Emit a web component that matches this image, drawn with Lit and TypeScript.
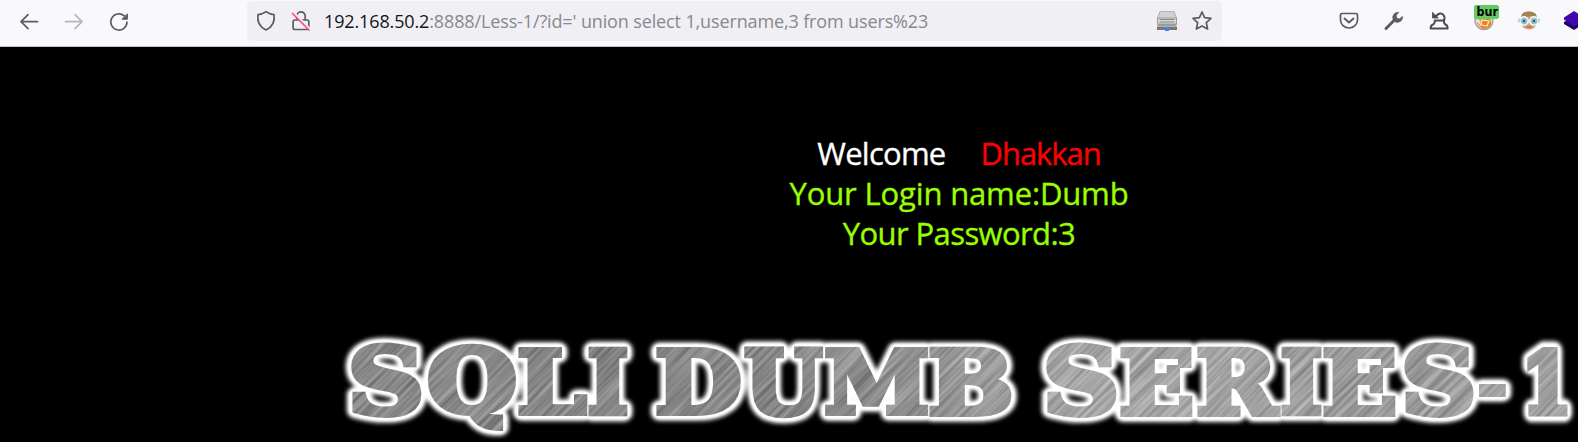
import { LitElement, html, svg, css } from "lit";
import { customElement } from "lit/decorators.js";

const BANNER_FONT = "DejaVu Serif";

// Each banner letter with the box its ink fills: [char, left, right, top, bottom]
const LETTERS: [string, number, number, number, number][] = [
  ["S", 351, 422, 343, 418],
  ["Q", 428, 516, 343, 431],
  ["L", 518, 588, 347, 416],
  ["I", 588, 628, 347, 416],
  ["D", 656, 741, 347, 416],
  ["U", 744, 824, 347, 418],
  ["M", 825, 928, 347, 416],
  ["B", 929, 1011, 347, 417],
  ["S", 1046, 1117, 343, 418],
  ["E", 1120, 1193, 347, 417],
  ["R", 1197, 1281, 347, 417],
  ["I", 1281, 1322, 347, 416],
  ["E", 1323, 1396, 347, 417],
  ["S", 1404, 1474, 343, 418],
  ["-", 1479, 1506, 383, 397],
  ["1", 1527, 1568, 347, 416],
];

@customElement("sqli-banner")
class SqliBanner extends LitElement {
  static styles = css`
    :host { display: block; }
    .art { display: block; width: 100%; height: 100%; }
    .glyph { font-family: "DejaVu Serif", serif; font-weight: 700; font-size: 100px; }
    .glyph { vector-effect: non-scaling-stroke; stroke-linejoin: round; }
    .halo { fill: #fff; stroke: #fff; stroke-width: 17; }
    .rim { fill: #fff; stroke: #fff; stroke-width: 12; }
    .gap { fill: #000; stroke: #000; stroke-width: 8; }
    .body { fill: #fff; stroke: #fff; stroke-width: 6.4; stroke-linejoin: miter; }
  `;

  private transforms: string[] = [];

  constructor() {
    super();
    const ctx = document.createElement("canvas").getContext("2d")!;
    ctx.font = `bold 100px "${BANNER_FONT}"`;
    this.transforms = LETTERS.map(([ch, l, r, t, b]) => {
      const m = ctx.measureText(ch);
      const inset = 3.2;
      const sx = (r - l - inset * 2) / (m.actualBoundingBoxRight + m.actualBoundingBoxLeft);
      const sy = (b - t - inset * 2) / (m.actualBoundingBoxAscent + m.actualBoundingBoxDescent);
      const tx = l + inset + m.actualBoundingBoxLeft * sx;
      const ty = t + inset + m.actualBoundingBoxAscent * sy;
      return `matrix(${sx} 0 0 ${sy} ${tx} ${ty})`;
    });
  }

  private glyphs(kinds: string[]) {
    return LETTERS.map(([ch], i) =>
      kinds.map((k) => svg`<text class="glyph ${k}" transform=${this.transforms[i]}>${ch}</text>`)
    );
  }

  render() {
    return html`<svg class="art" viewBox="330 320 1248 122" preserveAspectRatio="none">
      <defs>
        <filter id="soft" filterUnits="userSpaceOnUse" x="330" y="320" width="1248" height="122">
          <feGaussianBlur stdDeviation="2"></feGaussianBlur>
        </filter>
        <filter id="rimsoft" filterUnits="userSpaceOnUse" x="330" y="320" width="1248" height="122">
          <feGaussianBlur stdDeviation="0.9"></feGaussianBlur>
        </filter>
        <filter id="grain" filterUnits="userSpaceOnUse" x="-100" y="350" width="1100" height="1200" color-interpolation-filters="sRGB">
          <feTurbulence type="fractalNoise" baseFrequency="0.01 0.3" numOctaves="3" seed="4"></feTurbulence>
          <feColorMatrix type="matrix" values="1.1 0 0 0 -0.03  1.1 0 0 0 -0.03  1.1 0 0 0 -0.03  0 0 0 0 1"></feColorMatrix>
        </filter>
        <linearGradient id="metal" gradientUnits="userSpaceOnUse" x1="340" y1="0" x2="1578" y2="0">
          <stop offset="0" stop-color="#8c8c8c"></stop>
          <stop offset=".3" stop-color="#848484"></stop>
          <stop offset=".45" stop-color="#939393"></stop>
          <stop offset=".6" stop-color="#b8b8b8"></stop>
          <stop offset=".7" stop-color="#b4b4b4"></stop>
          <stop offset=".85" stop-color="#a2a2a2"></stop>
          <stop offset="1" stop-color="#b0b0b0"></stop>
        </linearGradient>
        <mask id="letters" maskUnits="userSpaceOnUse" x="330" y="320" width="1248" height="122">
          ${this.glyphs(["gap", "body"])}
        </mask>
      </defs>
      <g filter="url(#soft)">${this.glyphs(["halo"])}</g>
      <g filter="url(#rimsoft)">${this.glyphs(["rim"])}</g>
      <g mask="url(#letters)">
        <rect x="330" y="320" width="1248" height="122" fill="url(#metal)"></rect>
        <g opacity=".33"><g transform="rotate(-45)">
          <rect x="-100" y="350" width="1100" height="1200" transform="translate(0 0)" filter="url(#grain)"></rect>
        </g></g>
      </g>
    </svg>`;
  }
}

@customElement("app-root")
class AppRoot extends LitElement {
  static styles = css`
    :host {
      display: flex; flex-direction: column; width: 1578px; height: 442px;
      overflow: hidden; background: #000;
      font-family: "Open Sans", "Noto Sans", sans-serif;
    }
    .toolbar {
      box-sizing: border-box; display: flex; flex: none; height: 47px;
      background: #f9f9fb; border-bottom: 1px solid #c3c3c5; padding-top: 1px;
    }
    .nav { display: flex; flex: none; gap: 23px; width: 247px; box-sizing: border-box; padding: 10px 0 0 18px; }
    .icon { display: block; flex: none; width: 22px; height: 22px; overflow: visible; fill: none;
      stroke: #5b5b66; stroke-width: 1.7; stroke-linecap: round; stroke-linejoin: round; }
    .forward { opacity: .42; }
    .urlbar {
      box-sizing: border-box; display: flex; flex: none; width: 975px; height: 40px; padding: 9px 9px 0 8px;
      background: #f0f0f4; border-radius: 5px;
    }
    .urlbar .icon + .icon { margin-left: 13px; }
    .url { flex: 1; margin: -1px 0 0 12px; font-size: 18px; line-height: 24px; color: #88888e; white-space: pre; letter-spacing: -0.13px; }
    .host { color: #15141a; }
    .actions { display: flex; flex: none; gap: 23px; padding: 9px 0 0 116px; }
    .tag { font: 700 13px "DejaVu Sans", sans-serif; fill: #000; stroke: none; }
    .page { flex: 1; display: flex; flex-direction: column; }
    .message { width: 338px; margin-left: 790px; padding-top: 86px; color: #99ff00; font-size: 31px; line-height: 40px; -webkit-text-stroke: 0.35px currentColor; }
    .line { display: flex; justify-content: center; white-space: nowrap; }
    .welcome { color: #fff; margin-right: 35px; letter-spacing: -0.75px; }
    .name { color: #f00; letter-spacing: -1.05px; }
    .login { letter-spacing: -0.15px; }
    .pass { letter-spacing: -0.6px; }
    sqli-banner { width: 1248px; height: 122px; margin: 67px 0 0 330px; flex: none; }
  `;

  render() {
    return html`
      <div class="toolbar">
        <div class="nav">
          <svg class="icon" viewBox="0 0 22 22"><path d="M19.5 10.7H3M10 3.7l-7 7 7 7"/></svg>
          <svg class="icon forward" viewBox="0 0 22 22"><path d="M2.5 10.7H19M12 3.7l7 7-7 7"/></svg>
          <svg class="icon" viewBox="0 0 22 22"><path d="M19 11a8.1 8.1 0 1 1-2.8-6.2"/><path d="M19.4 3.2v5h-5z" fill="#5b5b66" stroke-width="1"/></svg>
        </div>
        <div class="urlbar">
          <svg class="icon" viewBox="0 0 22 22"><path d="M11 1.7 Q15.2 4.2 19 4.6 Q20.7 15.3 11 20 Q1.3 15.3 3 4.6 Q6.8 4.2 11 1.7Z"/></svg>
          <svg class="icon" viewBox="0 0 22 22"><path d="M6.8 10V6a4.2 4.2 0 0 1 8.4 0v4M5 10h12.2q1.6 0 1.6 1.6V17.5q0 2-2 2H5q-1.9 0-1.9-2v-5.6Q3.1 10 5 10Z"/><path d="M3.5 3 20 19.5" stroke="#f0f0f4" stroke-width="3"/><path d="M2.5 3.5 19 20" stroke="#ff4f73"/></svg>
          <div class="url"><span class="host">192.168.50.2</span>:8888/Less-1/?id=' union select 1,username,3 from users%23</div>
          <svg class="icon" viewBox="0 0 22 22">
            <g stroke="none">
              <path d="M4 1h14l3 7v6q0 2-2 2H3q-2 0-2-2V8z" fill="#9c9c9c"/>
              <path d="M4.5 1.5h13l2.5 6H2z" fill="#d2d2d2"/>
              <path d="M2 8.5h18v5H2z" fill="#d8d8d8"/>
              <path d="M4 9.5h14M4 12h14" stroke="#888" stroke-width="1"/>
              <path d="M1 16.5h20v3.5H1z" fill="#777"/>
              <path d="M9 17h4v4H9z" fill="#3a86f4"/>
            </g>
          </svg>
          <svg class="icon" viewBox="0 0 22 22"><path d="M11 2 13.6 7.7 20 8.4 15.3 12.6 16.6 19 11 15.9 5.4 19 6.7 12.6 2 8.4 8.4 7.7Z"/></svg>
        </div>
        <div class="actions">
          <svg class="icon" viewBox="0 0 22 22"><path d="M4 3.5h14q1.5 0 1.5 1.6V10a8.5 8 0 0 1-17 0V5.1Q2.5 3.5 4 3.5Z"/><path d="m6.5 8.5 4.5 4 4.5-4" stroke-width="1.9"/></svg>
          <svg class="icon" viewBox="0 0 22 22"><path d="M3 18.500 11.500 10" stroke-width="3"/><path d="M15.800 2.300a5.300 5.300 0 0 0-5.700 7.400l2.200 2.200a5.300 5.300 0 0 0 7.400-5.700l-3.200 2.600-2.600-.6-.6-2.600z" fill="#5b5b66" stroke-width=".5"/></svg>
          <svg class="icon" viewBox="0 0 22 22"><g stroke="#4c4c4f"><path d="M5 14.500q1.800-.8 1.800-4h9q0 3.200 1.800 4 2 .8 2 4h-17q0-3.200 2.400-4Z" stroke-width="2"/><path d="M8 6q4.500-4.500 7.500-1 1.800 2.500 .5 5.500" stroke-width="2"/><path d="M4.500 2.500v5.500h5.500z" fill="#4c4c4f" stroke-width=".8"/></g></svg>
          <svg class="icon" viewBox="0 0 22 22">
            <circle cx="11" cy="10.500" r="9" fill="#ddd" stroke="#a5a5a5" stroke-width="1.500"/>
            <path d="M3 7 7 9.500 17 8l1.500 6q-3 4.500-8 5Q7 17 3.500 13l5-1z" fill="#f08020" stroke="none"/>
            <path d="M8 15 9 10l7 1-2 5zM5 12l3 3" stroke="#fff1d8" stroke-width="1.100"/>
            <rect x="1" y="-5" width="25" height="14" rx="2" fill="#60cd62" stroke="none"/>
            <text class="tag" x="3.500" y="6" textLength="21.500" lengthAdjust="spacingAndGlyphs">bur</text>
          </svg>
          <svg class="icon" viewBox="0 0 22 22"><g stroke="none">
            <path d="M3 10Q3 1.500 11 1.500t8 8.500q0 9.500-8 9.500T3 10Z" fill="#d89d78"/>
            <path d="M3 10Q2 1.500 11 1.500T19 10L14 6 8 7z" fill="#a38355"/>
            <circle cx="6" cy="11" r="4" fill="#8cc3cf"/><circle cx="16" cy="11" r="4" fill="#8cc3cf"/>
            <circle cx="6" cy="11" r="1.300" fill="#335b68"/><circle cx="16" cy="11" r="1.300" fill="#335b68"/></g>
            <g stroke="#eaf5f7" stroke-width="1.700"><circle cx="6" cy="11" r="4.200"/><circle cx="16" cy="11" r="4.200"/></g>
            <path d="M1 9v3M21 9v3" stroke="#8ab8c4" stroke-width="1"/>
            <path d="M9 17h4" stroke="#a85c49" stroke-width="1.200"/>
          </svg>
          <svg class="icon" viewBox="0 0 22 22"><g stroke="none"><path d="M1 12 11 7l10 5v2l-10 6-10-6z" fill="#1b0369"/><path d="m11 1 10 6.500v2l-10 7-10-7v-2z" fill="#4308ac"/></g></svg>
        </div>
      </div>
      <div class="page">
        <div class="message">
          <div class="line"><span class="welcome">Welcome</span><span class="name">Dhakkan</span></div>
          <div class="line"><span class="login">Your Login name:Dumb</span></div>
          <div class="line"><span class="pass">Your Password:3</span></div>
        </div>
        <sqli-banner></sqli-banner>
      </div>
    `;
  }
}
